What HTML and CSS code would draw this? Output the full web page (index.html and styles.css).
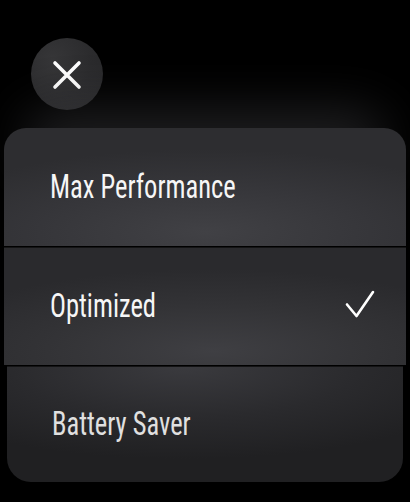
FILE: index.html
```html
<!DOCTYPE html>
<html><head><meta charset="utf-8"><link rel="stylesheet" href="styles.css"></head>
<body>
<div class="screen">
  <div class="close">
    <svg width="30" height="30" viewBox="0 0 30 30"><path d="M3 3L27 27M27 3L3 27" stroke="#fff" stroke-width="3.6" stroke-linecap="round" fill="none"/></svg>
  </div>
  <div class="card">
    <div class="row row-top"><span class="label">Max Performance</span></div>
    <div class="row row-mid"><span class="label">Optimized</span>
      <svg class="check" width="30" height="30" viewBox="0 0 30 30"><path d="M2 14.5L11.5 26L28 2" stroke="#fff" stroke-width="2.6" stroke-linecap="round" stroke-linejoin="round" fill="none"/></svg>
    </div>
    <div class="row row-bottom"><span class="label dim">Battery Saver</span></div>
  </div>
</div>
</body></html>
```
FILE: styles.css
```css
html,body{margin:0;padding:0;background:#000;}
body{width:410px;height:502px;overflow:hidden;font-family:"Roboto Condensed","Roboto",sans-serif;}
.screen{padding-top:38px;}
.close{width:72px;height:72px;margin-left:31px;border-radius:50%;
  background:radial-gradient(circle at 30% 30%,#363638 0%,#2b2b2d 55%,#262628 100%);
  display:flex;align-items:center;justify-content:center;}
.close svg{margin-top:1px;}
.card{margin:18px 4px 0;display:flex;flex-direction:column;gap:1px;position:relative;}
.card::before{content:"";position:absolute;left:20px;right:20px;top:0;height:60px;
  box-shadow:0 -18px 50px rgba(70,70,76,0.45);border-radius:30px;pointer-events:none;}
.row{height:118px;display:flex;align-items:center;justify-content:space-between;padding:0 31px 0 46px;position:relative;}
.row-top{border-radius:22px 22px 0 0;height:118px;
  background:radial-gradient(ellipse 75% 70% at 50% 88%,#414145 0%,#36363a 55%,#2d2d30 100%);}
.row-mid{height:117px;border-top:1px solid #141415;
  background:radial-gradient(ellipse 75% 70% at 52% 88%,#3f3f43 0%,#333336 55%,#2a2a2d 100%);}
.row-bottom{height:115px;margin:0 3px;padding-left:45px;border-top:1px solid #141415;border-radius:0 0 24px 24px;
  background:radial-gradient(ellipse 80% 80% at 45% 0%,#3a3a3e 0%,#2a2a2d 55%,#202022 100%);}
.label{color:#f6f6f6;font-size:34px;line-height:40px;display:inline-block;transform:scaleX(0.78);transform-origin:left center;white-space:nowrap;margin-top:-3px;}
.dim{color:#e0e0e0;}
.check{margin-top:-3px;}
```
